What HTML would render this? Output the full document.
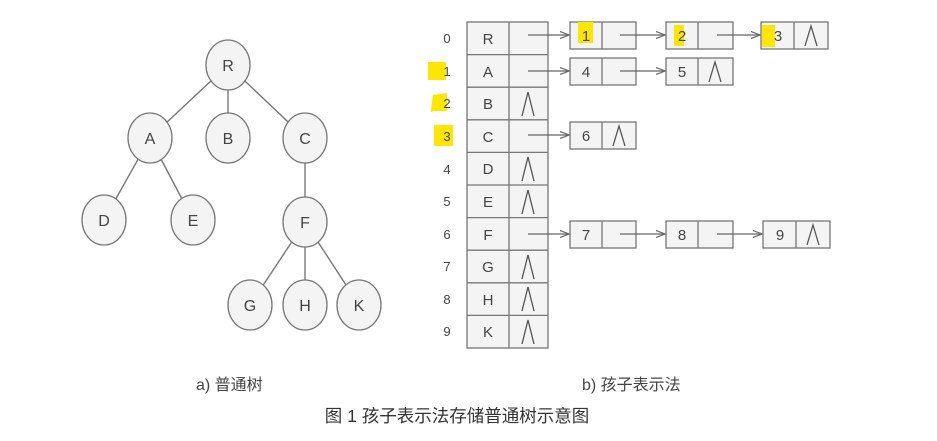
<!DOCTYPE html>
<html><head><meta charset="utf-8"><style>
html,body{margin:0;padding:0;background:#fff;width:937px;height:441px;overflow:hidden}
text{font-family:"Liberation Sans","Noto Sans CJK SC",sans-serif}
</style></head><body>
<svg width="937" height="441" viewBox="0 0 937 441" xmlns="http://www.w3.org/2000/svg">
<defs><marker id="ar" markerWidth="10" markerHeight="8" refX="9" refY="4" orient="auto" markerUnits="userSpaceOnUse"><path d="M0,0.5 L9,4 L0,7.5" fill="none" stroke="#666" stroke-width="1.2"/></marker></defs>
<g stroke="#777" stroke-width="1.4">
<line x1="228" y1="65" x2="150" y2="138"/><line x1="228" y1="65" x2="228" y2="138"/><line x1="228" y1="65" x2="305" y2="138"/>
<line x1="150" y1="138" x2="104" y2="220"/><line x1="150" y1="138" x2="193" y2="220"/>
<line x1="305" y1="138" x2="305" y2="222"/>
<line x1="305" y1="222" x2="250" y2="305"/><line x1="305" y1="222" x2="305" y2="305"/><line x1="305" y1="222" x2="359" y2="305"/>
</g>
<g fill="#f4f4f4" stroke="#777" stroke-width="1.3">
<ellipse cx="228" cy="65" rx="22" ry="25"/><ellipse cx="150" cy="138" rx="22" ry="25"/><ellipse cx="228" cy="138" rx="22" ry="25"/><ellipse cx="305" cy="138" rx="22" ry="25"/>
<ellipse cx="104" cy="220" rx="22" ry="25"/><ellipse cx="193" cy="220" rx="22" ry="25"/><ellipse cx="305" cy="222" rx="22" ry="25"/>
<ellipse cx="250" cy="305" rx="22" ry="25"/><ellipse cx="305" cy="305" rx="22" ry="25"/><ellipse cx="359" cy="305" rx="22" ry="25"/>
</g>
<g font-size="16" fill="#444" text-anchor="middle">
<text x="228" y="71">R</text><text x="150" y="144">A</text><text x="228" y="144">B</text><text x="305" y="144">C</text>
<text x="104" y="226">D</text><text x="193" y="226">E</text><text x="305" y="228">F</text>
<text x="250" y="311">G</text><text x="305" y="311">H</text><text x="359" y="311">K</text>
</g>
<g fill="#ffe600">
<rect x="428" y="62" width="18" height="18"/><path d="M433,95 L447,93 L447,111 L433,111 Q431,114 431,110 Z"/><rect x="434" y="125" width="19" height="21"/>
</g>
<rect x="467" y="22" width="81" height="326" fill="#f4f4f4" stroke="#777" stroke-width="1.3"/>
<line x1="509" y1="22" x2="509" y2="348" stroke="#777" stroke-width="1.3"/>
<g stroke="#777" stroke-width="1.3">
<line x1="467" y1="54.6" x2="548" y2="54.6"/><line x1="467" y1="87.2" x2="548" y2="87.2"/><line x1="467" y1="119.8" x2="548" y2="119.8"/><line x1="467" y1="152.4" x2="548" y2="152.4"/><line x1="467" y1="185" x2="548" y2="185"/><line x1="467" y1="217.6" x2="548" y2="217.6"/><line x1="467" y1="250.2" x2="548" y2="250.2"/><line x1="467" y1="282.8" x2="548" y2="282.8"/><line x1="467" y1="315.4" x2="548" y2="315.4"/>
</g>
<g font-size="15" fill="#444" text-anchor="middle">
<text x="488" y="44">R</text><text x="488" y="77">A</text><text x="488" y="109">B</text><text x="488" y="142">C</text><text x="488" y="174">D</text><text x="488" y="207">E</text><text x="488" y="240">F</text><text x="488" y="272">G</text><text x="488" y="305">H</text><text x="488" y="337">K</text>
</g>
<g font-size="13" fill="#444" text-anchor="middle">
<text x="447" y="43">0</text><text x="447" y="76">1</text><text x="447" y="108">2</text><text x="447" y="141">3</text><text x="447" y="174">4</text><text x="447" y="206">5</text><text x="447" y="239">6</text><text x="447" y="271">7</text><text x="447" y="304">8</text><text x="447" y="336">9</text>
</g>
<g fill="none" stroke="#555" stroke-width="1.3">
<path d="M522,116 L528,92 L534,116"/><path d="M522,181 L528,157 L534,181"/><path d="M522,214 L528,190 L534,214"/><path d="M522,279 L528,255 L534,279"/><path d="M522,311 L528,287 L534,311"/><path d="M522,344 L528,320 L534,344"/>
</g>
<g fill="#f4f4f4" stroke="#777" stroke-width="1.3">
<rect x="570" y="22" width="66" height="27"/><rect x="666" y="22" width="67" height="27"/><rect x="761" y="22" width="67" height="27"/>
<rect x="570" y="58" width="66" height="27"/><rect x="666" y="58" width="67" height="27"/>
<rect x="570" y="122" width="66" height="27"/>
<rect x="570" y="221" width="66" height="27"/><rect x="666" y="221" width="67" height="27"/><rect x="763" y="221" width="67" height="27"/>
</g>
<g fill="#ffe600"><rect x="578" y="22" width="15" height="21"/><rect x="674" y="25" width="10" height="21"/><rect x="762" y="25" width="13" height="22"/></g>
<g stroke="#777" stroke-width="1.3">
<line x1="602" y1="22" x2="602" y2="49"/><line x1="698" y1="22" x2="698" y2="49"/><line x1="794" y1="22" x2="794" y2="49"/>
<line x1="602" y1="58" x2="602" y2="85"/><line x1="698" y1="58" x2="698" y2="85"/>
<line x1="602" y1="122" x2="602" y2="149"/>
<line x1="602" y1="221" x2="602" y2="248"/><line x1="698" y1="221" x2="698" y2="248"/><line x1="796" y1="221" x2="796" y2="248"/>
</g>
<g font-size="15" fill="#444" text-anchor="middle">
<text x="586" y="41">1</text><text x="682" y="41">2</text><text x="778" y="41">3</text>
<text x="586" y="77">4</text><text x="682" y="77">5</text>
<text x="586" y="141">6</text>
<text x="586" y="240">7</text><text x="682" y="240">8</text><text x="780" y="240">9</text>
</g>
<g fill="none" stroke="#555" stroke-width="1.3">
<path d="M805,46 L811,26 L817,46"/><path d="M709,82 L715,62 L721,82"/><path d="M613,146 L619,126 L625,146"/><path d="M807,245 L813,225 L819,245"/>
</g>
<g stroke="#666" stroke-width="1.2" marker-end="url(#ar)">
<line x1="528" y1="35" x2="569" y2="35"/><line x1="620" y1="35" x2="665" y2="35"/><line x1="717" y1="35" x2="760" y2="35"/>
<line x1="528" y1="71" x2="569" y2="71"/><line x1="620" y1="71" x2="665" y2="71"/>
<line x1="528" y1="135" x2="569" y2="135"/>
<line x1="528" y1="234" x2="569" y2="234"/><line x1="620" y1="234" x2="665" y2="234"/><line x1="717" y1="234" x2="762" y2="234"/>
</g>
<text x="196" y="390" font-size="16" fill="#444">a) 普通树</text>
<text x="582" y="390" font-size="16" fill="#444">b) 孩子表示法</text>
<text x="457" y="422" font-size="17.5" fill="#333" text-anchor="middle">图 1 孩子表示法存储普通树示意图</text>
</svg>
</body></html>
